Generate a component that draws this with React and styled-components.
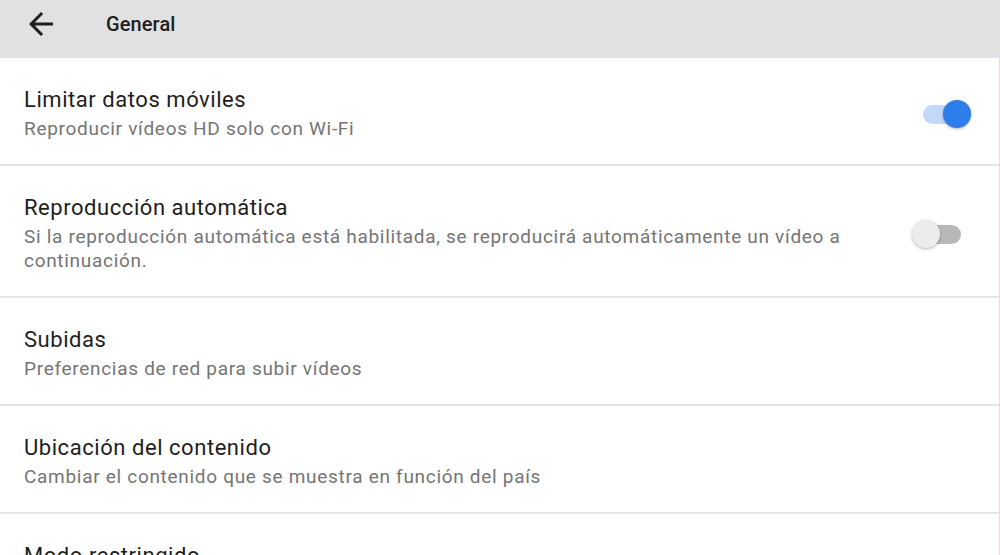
import React from "react";
import styled, { createGlobalStyle } from "styled-components";

const Global = createGlobalStyle`
  html, body { margin: 0; padding: 0; background: #ffffff; }
  body { font-family: Roboto, "Noto Sans", Arial, sans-serif; -webkit-font-smoothing: antialiased; }
`;

const Page = styled.div`
  width: 1000px;
  height: 555px;
  overflow: hidden;
  display: flex;
  flex-direction: column;
`;

const Toolbar = styled.header`
  height: 58px;
  flex: none;
  background: #e1e1e1;
  display: flex;
  align-items: center;
  padding-left: 23px;
  gap: 47px;
`;

const BackButton = styled.button`
  border: 0;
  background: none;
  padding: 0;
  width: 36px;
  height: 36px;
  display: flex;
  align-items: center;
  justify-content: center;
  margin-top: -11px;
  color: #1f1f1f;
`;

const Title = styled.h1`
  margin: 0 0 10px 0;
  font-family: Roboto, sans-serif;
  font-weight: 500;
  font-size: 20px;
  color: #202020;
  letter-spacing: 0.1px;
`;

const List = styled.div`
  flex: 1;
  display: flex;
  flex-direction: column;
  border-right: 1px solid #f5d8cc;
`;

const Row = styled.div`
  display: flex;
  align-items: center;
  padding: 29px 28px 23px 24px;
  border-bottom: 2px solid #e4e4e4;
  flex: none;
`;

const Texts = styled.div`
  flex: 1;
  min-width: 0;
  padding-right: 40px;
`;

const RowTitle = styled.div`
  font-size: 22px;
  line-height: 26px;
  color: #1e1e1e;
  letter-spacing: 0.55px;
`;

const RowSub = styled.div`
  margin-top: 4px;
  font-size: 19px;
  line-height: 24px;
  color: #757575;
  letter-spacing: 0.7px;
`;

const SwitchTrack = styled.div`
  position: relative;
  width: 38px;
  height: 19px;
  border-radius: 10px;
  flex: none;
  margin-right: 10px;
  background: ${(p) => (p.$on ? "#c4d8fa" : "#b8b8b8")};
`;

const SwitchThumb = styled.div`
  position: absolute;
  top: 50%;
  left: ${(p) => (p.$on ? "20px" : "-11px")};
  width: 28px;
  height: 28px;
  margin-top: -14px;
  border-radius: 50%;
  background: ${(p) => (p.$on ? "#2d7eeb" : "#ececec")};
  box-shadow: 0 1px 3px rgba(0, 0, 0, 0.3);
`;

const Switch = ({ on }) => (
  <SwitchTrack $on={on}>
    <SwitchThumb $on={on} />
  </SwitchTrack>
);

const items = [
  { t: "Limitar datos móviles", s: "Reproducir vídeos HD solo con Wi-Fi", sw: true },
  {
    t: "Reproducción automática",
    s: "Si la reproducción automática está habilitada, se reproducirá automáticamente un vídeo a continuación.",
    sw: false,
  },
  { t: "Subidas", s: "Preferencias de red para subir vídeos" },
  { t: "Ubicación del contenido", s: "Cambiar el contenido que se muestra en función del país" },
  { t: "Modo restringido", s: "Ayuda a ocultar contenido para adultos" },
];

export default function App() {
  return (
    <Page>
      <Global />
      <Toolbar>
        <BackButton aria-label="Atrás">
          <svg width="36" height="36" viewBox="0 0 24 24" fill="currentColor">
            <path d="M20 11H7.83l5.59-5.59L12 4l-8 8 8 8 1.41-1.41L7.83 13H20v-2z" />
          </svg>
        </BackButton>
        <Title>General</Title>
      </Toolbar>
      <List>
        {items.map((it) => (
          <Row key={it.t}>
            <Texts>
              <RowTitle>{it.t}</RowTitle>
              <RowSub>{it.s}</RowSub>
            </Texts>
            {it.sw !== undefined && <Switch on={it.sw} />}
          </Row>
        ))}
      </List>
    </Page>
  );
}
